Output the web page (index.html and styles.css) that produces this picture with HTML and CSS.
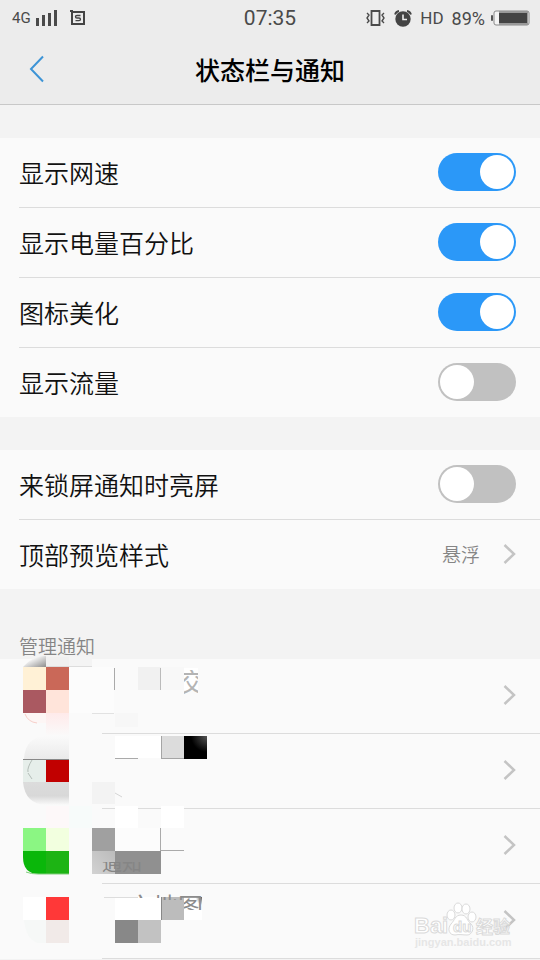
FILE: index.html
```html
<!DOCTYPE html>
<html lang="zh-CN">
<head>
<meta charset="utf-8">
<meta name="viewport" content="width=device-width, initial-scale=1">
<title>状态栏与通知</title>
<link rel="stylesheet" href="styles.css">
</head>
<body>
<header class="top">
  <div class="status">
    <div class="status-side">
      <span class="net">4G</span>
      <svg class="signal" width="22" height="16" viewBox="0 0 22 16" fill="#4a4a4a"><path d="M0 8h3v8H0zM6 5h3v11H6zM12 3h3v13h-3zM18 0h3v16h-3z"/></svg>
      <svg class="sim" width="16" height="16" viewBox="0 0 16 16" fill="none" stroke="#444"><path d="M2 2h12v12H2z" stroke-width="2"/><path d="M0 1h3" stroke-width="2"/><path d="M10.5 5.500H7Q5.500 5.500 5.500 6.700T7 8h2q1.500 0 1.500 1.300T9 10.700H5.500" stroke-width="1.300"/></svg>
    </div>
    <span class="clock">07:35</span>
    <div class="status-side status-right">
      <svg width="20" height="16" viewBox="0 0 20 16" fill="none" stroke="#4a4a4a"><path d="M5.500 1h8v14h-8z" stroke-width="1.800"/><path d="M1 3l2 2-2 3 2 3-2 2M18 3l-2 2 2 3-2 3 2 2" stroke-width="1.400"/></svg>
      <svg width="18" height="17" viewBox="0 0 18 17"><circle cx="9" cy="9" r="7.700" fill="#444"/><path d="M1 4.500Q2 1.500 5 1M17 4.500Q16 1.500 13 1" fill="none" stroke="#444" stroke-width="1.800"/><path d="M9 4.500V9.500h4" fill="none" stroke="#eee" stroke-width="1.600"/></svg>
      <span>HD</span>
      <span class="percent">89%</span>
      <svg class="battery" width="39" height="16" viewBox="0 0 39 16"><rect x="0" y="5" width="2" height="6" rx="1" fill="#555"/><rect x="3" y="1" width="35" height="14" rx="2" fill="#f4f4f4" stroke="#888"/><path d="M8 1h29v14H8z" fill="#999"/><path d="M8 3h28v10H8z" fill="#444"/></svg>
    </div>
  </div>
  <div class="bar">
    <button class="back" aria-label="返回"><svg width="16" height="28" viewBox="0 0 16 28"><path d="M14 1.500 2 14l12 12.500" fill="none" stroke="#3d94d6" stroke-width="2"/></svg></button>
    <h1>状态栏与通知</h1>
  </div>
</header>
<main>
  <section class="group">
    <label class="row"><span>显示网速</span><input class="switch" type="checkbox" role="switch" checked></label>
    <label class="row"><span>显示电量百分比</span><input class="switch" type="checkbox" role="switch" checked></label>
    <label class="row"><span>图标美化</span><input class="switch" type="checkbox" role="switch" checked></label>
    <label class="row"><span>显示流量</span><input class="switch" type="checkbox" role="switch"></label>
  </section>
  <section class="group">
    <label class="row"><span>来锁屏通知时亮屏</span><input class="switch" type="checkbox" role="switch"></label>
    <a class="row" href="#style"><span>顶部预览样式</span><span class="value">悬浮</span><svg class="chevron" width="13" height="20" viewBox="0 0 13 20"><path d="M1.500 1 11 10 1.500 19"/></svg></a>
  </section>
  <h2>管理通知</h2>
  <section class="apps">
    <a class="app" href="#app1" aria-label="应用 1"><svg class="chevron" width="13" height="20" viewBox="0 0 13 20"><path d="M1.500 1 11 10 1.500 19"/></svg></a>
    <a class="app" href="#app2" aria-label="应用 2"><svg class="chevron" width="13" height="20" viewBox="0 0 13 20"><path d="M1.500 1 11 10 1.500 19"/></svg></a>
    <a class="app" href="#app3" aria-label="应用 3"><svg class="chevron" width="13" height="20" viewBox="0 0 13 20"><path d="M1.500 1 11 10 1.500 19"/></svg></a>
    <a class="app" href="#app4" aria-label="应用 4"><svg class="chevron" width="13" height="20" viewBox="0 0 13 20"><path d="M1.500 1 11 10 1.500 19"/></svg></a>
    <svg class="mosaic" width="220" height="310" viewBox="0 650 220 310" aria-hidden="true">
      <defs>
        <linearGradient id="corner" x1="0" y1="0" x2="1" y2="1"><stop offset=".35" stop-color="#f4f4f4"/><stop offset="1" stop-color="#8c8c8c"/></linearGradient>
        <linearGradient id="shade" x1="0" y1="0" x2="0" y2="1"><stop offset="0" stop-color="#dcdcdc"/><stop offset=".6" stop-color="#d8d8d8"/><stop offset="1" stop-color="#fafafa"/></linearGradient>
        <linearGradient id="pale" x1="0" y1="0" x2="0" y2="1"><stop offset="0" stop-color="#fafafa"/><stop offset="1" stop-color="#eaeaea"/></linearGradient>
        <linearGradient id="pink" x1="0" y1="0" x2="0" y2="1"><stop offset="0" stop-color="#ffeaea"/><stop offset="1" stop-color="#fafafa"/></linearGradient>
        <linearGradient id="grey" x1="1" y1="0" x2="0" y2="1"><stop offset="0" stop-color="#bbb"/><stop offset="1" stop-color="#d2d2d2"/></linearGradient>
        <radialGradient id="black" cx="1" cy="0" r=".7"><stop offset="0" stop-color="#555"/><stop offset="1" stop-color="#000"/></radialGradient>
        <radialGradient id="fold" cx="1" cy="0" r="1"><stop offset="0" stop-color="#555"/><stop offset=".35" stop-color="#fff"/></radialGradient>
        <clipPath id="c1"><path d="M184 670h14v25h-14z"/></clipPath>
        <clipPath id="c2"><path d="M102 862h48v10h-48z"/></clipPath>
        <clipPath id="c3"><path d="M130 894h31v4h-31zM161 894h23v6h-23zM184 896h18v14h-18z"/></clipPath>
      </defs>
      <path d="M23 667Q33 655 46 656v11z" fill="url(#corner)"/>
      <path d="M46 657h23v10H46z" fill="#f0f0f0"/><path d="M69 657h23v9H69z" fill="#f4f4f4"/><path d="M46 666.500h46" stroke="#ddd"/>
      <path d="M23 667h23v23H23z" fill="#fff1d6"/><path d="M46 667h23v23H46z" fill="#ca6858"/>
      <path d="M23 690h23v23H23z" fill="#aa5961"/><path d="M46 690h23v23H46z" fill="#ffe4da"/>
      <path d="M24 713q3 9 12 10h10v-10z" fill="#fdf6f5"/><path d="M25 714q3 8 12 9" fill="none" stroke="#f7cfca"/>
      <path d="M46 713h23v23H46z" fill="url(#pink)"/>
      <path d="M69 667h45v46H69z" fill="#fcfcfc"/><path d="M114.500 668v22" stroke="#aaa"/><path d="M138 667h23v23h-23z" fill="#f1f1f1"/><path d="M160.500 668v22" stroke="#bbb"/><path d="M161 667h23v23h-23z" fill="#f8f8f8"/><path d="M184 668h14v22h-14z" fill="#fff"/>
      <text x="179" y="692" font-size="26" fill="#b4b4b4" clip-path="url(#c1)">交</text>
      <path d="M92 713.500h22" stroke="#e2e2e2"/><path d="M115 713h23v14h-23z" fill="#f7f7f7"/>
      <path d="M24 759Q25 737 46 736h23v23z" fill="url(#pale)"/><path d="M23 782h46v23H46Q25 804 23 782z" fill="url(#shade)"/>
      <path d="M23 759h23v23H23z" fill="#e6eeea"/><path d="M32 760q-5 8-4 12M28 773l4 6" stroke="#b4bdb8" fill="none"/><path d="M46 759h23v23H46z" fill="#c10000"/><path d="M23 759.500h46" stroke="#888"/>
      <path d="M92 782h23v22H92z" fill="#f3f3f3"/><path d="M115 793l7 4" stroke="#d5d5d5"/>
      <path d="M115 736h46v22h-46z" fill="#fff"/><path d="M115 758.500h23" stroke="#aaa"/><path d="M161 736h23v23h-23z" fill="#dcdcdc"/><path d="M161.500 736v23M161 758.500h23" stroke="#a5a5a5"/><path d="M184 736h23v23h-23z" fill="url(#black)"/>
      <path d="M115 806h23v22h-23zM161 806h23v22h-23z" fill="#fff"/><path d="M46 806h23v22H46z" fill="#fdf8f9"/><path d="M69 806h23v22H69z" fill="#f7fbfa"/>
      <path d="M23 828h23v23H23z" fill="#8bf683"/><path d="M46 828h23v23H46z" fill="#f2ffdf"/><path d="M23 851h23v23H39Q23 874 23 857z" fill="#0ab70a"/><path d="M46 851h23v23H46z" fill="#1db414"/><path d="M26 872q5 2 12 2h31" stroke="#80cd7b" fill="none"/>
      <path d="M92 828h23v23H92z" fill="#a0a0a0"/><path d="M92 851h23v23H92z" fill="url(#grey)"/><path d="M115 828h46v23h-46z" fill="#fcfcfc"/><path d="M115 851h46v23h-46z" fill="#909090"/><path d="M160.500 828v23M161 850.500h23" stroke="#aaa"/>
      <text x="102" y="871" font-size="20" fill="#858585" clip-path="url(#c2)">通知</text>
      <path d="M23 897h23v23H23z" fill="#fff"/><path d="M46 897h23v23H46z" fill="#ff3838"/><path d="M24 920h22v23H38Q26 940 24 920z" fill="#f6f8f7"/><path d="M46 920h23v23H46z" fill="#f1eae8"/>
      <path d="M115 897h46v23h-46z" fill="#fff"/><path d="M161 897h23v23h-23z" fill="#bcbcbc"/><path d="M184 897h18v23h-18z" fill="url(#fold)"/><path d="M161.500 897v23" stroke="#888"/>
      <path d="M115 920h23v23h-23z" fill="#888"/><path d="M138 920h23v23h-23z" fill="#c2c2c2"/><path d="M104 897.500h34" stroke="#ddd"/>
      <text x="128" y="916" font-size="25" fill="#8c8c8c" clip-path="url(#c3)">文地图</text>
    </svg>
    <svg class="watermark" width="104" height="54" viewBox="0 0 104 54" aria-hidden="true">
      <g fill="#fff" stroke="#dadada"><text x="0" y="32" font-size="22" font-weight="700" class="latin">Bai</text><ellipse cx="37" cy="14" rx="4" ry="5"/><ellipse cx="44" cy="7" rx="4" ry="5"/><ellipse cx="52" cy="8" rx="4" ry="5"/><ellipse cx="58" cy="16" rx="4" ry="5"/><path d="M47 14c6 0 6 6 10 9 4 4 1 11-4 11-4 0-8-1-12 0-6 0-8-6-4-11 4-4 4-9 10-9z"/><text x="39" y="31" font-size="15" font-weight="700" class="latin">du</text><text x="62" y="32" font-size="17" font-weight="700">经验</text></g>
      <text x="1" y="45" font-size="11" font-weight="700" fill="#e6e6e6" class="latin">jingyan.baidu.com</text>
    </svg>
  </section>
</main>
</body>
</html>
```
FILE: styles.css
```css
* { box-sizing: border-box; }
body {
  margin: 0;
  min-height: 100vh;
  background: #f3f3f3;
  color: #111;
  font-family: "Noto Sans CJK SC", "Noto Sans", sans-serif;
}
.top {
  background: #ececec;
  border-bottom: 1px solid #c8c8c8;
}
.status {
  display: grid;
  grid-template-columns: 1fr auto 1fr;
  align-items: center;
  height: 36px;
  padding: 0 10px;
  color: #4a4a4a;
  font-family: Roboto, sans-serif;
  font-size: 17px;
}
.status-side {
  display: flex;
  align-items: center;
}
.status-right {
  justify-content: flex-end;
  gap: 8px;
}
.net {
  margin-left: 2px;
  font-size: 15px;
}
.signal { margin-left: 5px; }
.sim { margin-left: 12px; }
.clock { font-size: 21px; }
.percent { font-size: 18px; }
.battery { margin-left: -2px; }
.bar {
  display: grid;
  grid-template-columns: 74px 1fr 74px;
  align-items: center;
  height: 68px;
  padding-bottom: 2px;
}
.back {
  display: flex;
  justify-content: center;
  padding: 8px 0;
  border: 0;
  background: none;
}
h1 {
  margin: 0;
  text-align: center;
  font-size: 25px;
  font-weight: 500;
  line-height: 36px;
  color: #000;
}
.group {
  margin-top: 33px;
  background: #fafafa;
}
.row {
  display: flex;
  align-items: center;
  height: 70px;
  margin-left: 19px;
  padding: 0 24px 2px 0;
  border-bottom: 1px solid #dcdcdc;
  color: #111;
  font-size: 25px;
  font-weight: 350;
  line-height: 36px;
  text-decoration: none;
}
.row:last-child {
  height: 69px;
  border-bottom: 0;
}
.switch {
  appearance: none;
  width: 78px;
  height: 38px;
  margin: 0 0 0 auto;
  padding: 2px;
  border-radius: 19px;
  background: #c1c1c1;
}
.switch::before {
  content: "";
  display: block;
  width: 34px;
  height: 34px;
  border-radius: 50%;
  background: #fff;
}
.switch:checked { background: #2b98f8; }
.switch:checked::before { margin-left: auto; }
.value {
  margin-left: auto;
  color: #858585;
  font-size: 19px;
}
.chevron {
  flex: none;
  margin-left: 23px;
  fill: none;
  stroke: #c4c4c4;
  stroke-width: 2.5;
}
h2 {
  margin: 0;
  padding: 43px 19px 0;
  color: #858585;
  font-size: 19px;
  font-weight: 350;
  line-height: 28px;
  height: 70px;
}
.apps {
  position: relative;
  background: #fafafa;
}
.app {
  display: flex;
  align-items: center;
  justify-content: flex-end;
  height: 75px;
  margin-left: 102px;
  padding: 0 24px 2px 0;
  border-bottom: 1px solid #dcdcdc;
}
.mosaic {
  position: absolute;
  left: 0;
  top: -9px;
}
.watermark {
  position: absolute;
  right: 22px;
  bottom: 4px;
}
.latin { font-family: "Liberation Sans", sans-serif; }
```
